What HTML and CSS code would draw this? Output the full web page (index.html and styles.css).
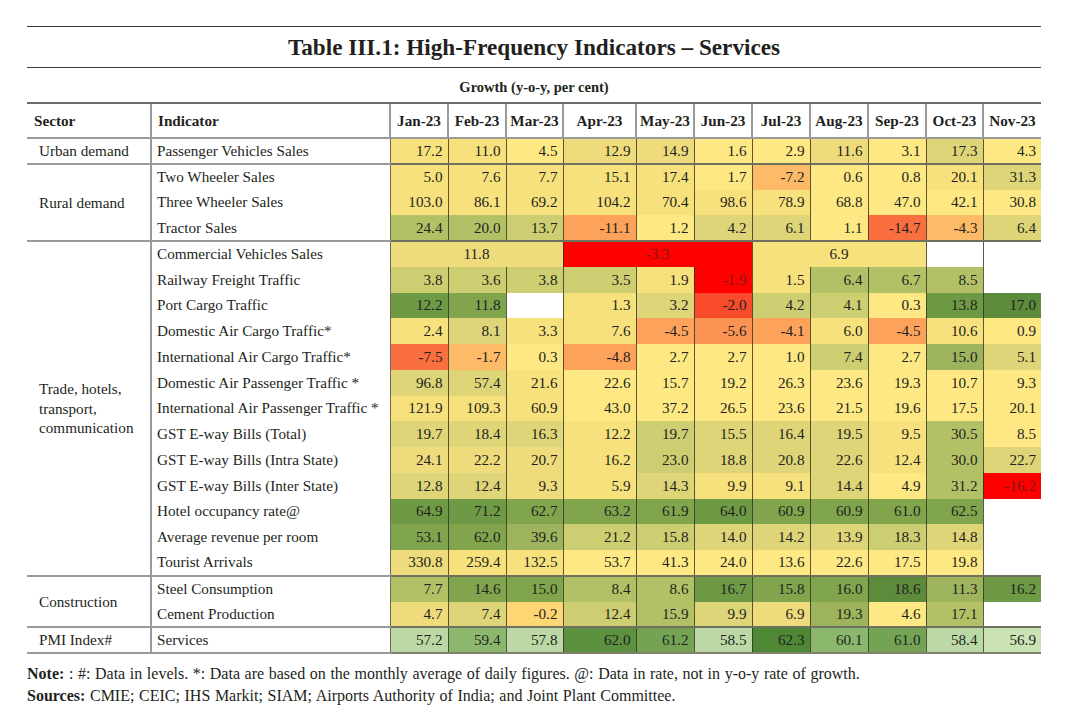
FILE: index.html
```html
<!DOCTYPE html>
<html lang="en">
<head>
<meta charset="utf-8">
<title>Table III.1: High-Frequency Indicators – Services</title>
<link rel="stylesheet" href="styles.css">
</head>
<body>
<div class="page">
  <h1 class="title">Table III.1: High-Frequency Indicators – Services</h1>
  <div class="caption">Growth (y-o-y, per cent)</div>
  <table class="hfi">
    <colgroup>
      <col class="w-sector"><col class="w-ind">
      <col class="w-m58"><col class="w-m58"><col class="w-m57"><col class="w-m73">
      <col class="w-m58"><col class="w-m58"><col class="w-m58"><col class="w-m58">
      <col class="w-m58"><col class="w-m57"><col class="w-m58">
    </colgroup>
    <thead>
      <tr>
        <th class="h-left h-sector">Sector</th>
        <th class="h-left">Indicator</th>
        <th>Jan-23</th><th>Feb-23</th><th>Mar-23</th><th>Apr-23</th><th>May-23</th><th>Jun-23</th>
        <th>Jul-23</th><th>Aug-23</th><th>Sep-23</th><th>Oct-23</th><th class="h-last">Nov-23</th>
      </tr>
    </thead>
    <tbody>
      <tr class="grp">
        <td class="sector">Urban demand</td>
        <td class="ind">Passenger Vehicles Sales</td>
        <td class="v y1">17.2</td><td class="v y1">11.0</td><td class="v y0">4.5</td><td class="v y2">12.9</td><td class="v y2">14.9</td><td class="v y0">1.6</td><td class="v y0">2.9</td><td class="v y2">11.6</td><td class="v y0">3.1</td><td class="v g1">17.3</td><td class="v y0 last">4.3</td>
      </tr>
      <tr class="grp">
        <td class="sector" rowspan="3">Rural demand</td>
        <td class="ind">Two Wheeler Sales</td>
        <td class="v y1">5.0</td><td class="v y1">7.6</td><td class="v y1">7.7</td><td class="v y1">15.1</td><td class="v y1">17.4</td><td class="v y0">1.7</td><td class="v o3">-7.2</td><td class="v y0">0.6</td><td class="v y0">0.8</td><td class="v y1">20.1</td><td class="v g1 last">31.3</td>
      </tr>
      <tr>
        <td class="ind">Three Wheeler Sales</td>
        <td class="v y1">103.0</td><td class="v y1">86.1</td><td class="v y1">69.2</td><td class="v y1">104.2</td><td class="v y1">70.4</td><td class="v y1">98.6</td><td class="v y1">78.9</td><td class="v y0">68.8</td><td class="v y0">47.0</td><td class="v y0">42.1</td><td class="v y0 last">30.8</td>
      </tr>
      <tr>
        <td class="ind">Tractor Sales</td>
        <td class="v g3">24.4</td><td class="v g3">20.0</td><td class="v g2">13.7</td><td class="v o2">-11.1</td><td class="v y0">1.2</td><td class="v g1">4.2</td><td class="v g1">6.1</td><td class="v y0">1.1</td><td class="v o1">-14.7</td><td class="v o3">-4.3</td><td class="v g1 last">6.4</td>
      </tr>
      <tr class="grp">
        <td class="sector" rowspan="13">Trade, hotels,<br>transport,<br>communication</td>
        <td class="ind">Commercial Vehicles Sales</td>
        <td class="v c y2" colspan="3">11.8</td><td class="v c r0" colspan="3">-3.3</td><td class="v c y1" colspan="3">6.9</td><td class="v wb"></td><td class="v w last"></td>
      </tr>
      <tr>
        <td class="ind">Railway Freight Traffic</td>
        <td class="v g2">3.8</td><td class="v g2">3.6</td><td class="v g2">3.8</td><td class="v g2">3.5</td><td class="v y1">1.9</td><td class="v r0 notop">-1.9</td><td class="v y1">1.5</td><td class="v g3">6.4</td><td class="v g3">6.7</td><td class="v g3">8.5</td><td class="v w last"></td>
      </tr>
      <tr>
        <td class="ind">Port Cargo Traffic</td>
        <td class="v g6">12.2</td><td class="v g5">11.8</td><td class="v w"></td><td class="v y1">1.3</td><td class="v g1">3.2</td><td class="v r1">-2.0</td><td class="v g2">4.2</td><td class="v g2">4.1</td><td class="v y0">0.3</td><td class="v g6">13.8</td><td class="v g7 last">17.0</td>
      </tr>
      <tr>
        <td class="ind">Domestic Air Cargo Traffic*</td>
        <td class="v y1">2.4</td><td class="v g1">8.1</td><td class="v y1">3.3</td><td class="v y1">7.6</td><td class="v o2">-4.5</td><td class="v o2b">-5.6</td><td class="v o2">-4.1</td><td class="v y1">6.0</td><td class="v o2">-4.5</td><td class="v y1">10.6</td><td class="v y0 last">0.9</td>
      </tr>
      <tr>
        <td class="ind">International Air Cargo Traffic*</td>
        <td class="v o1">-7.5</td><td class="v o3">-1.7</td><td class="v y0">0.3</td><td class="v o2">-4.8</td><td class="v y0">2.7</td><td class="v y0">2.7</td><td class="v y0">1.0</td><td class="v g2">7.4</td><td class="v y0">2.7</td><td class="v g4">15.0</td><td class="v g1 last">5.1</td>
      </tr>
      <tr>
        <td class="ind">Domestic Air Passenger Traffic *</td>
        <td class="v g1">96.8</td><td class="v g1">57.4</td><td class="v y1">21.6</td><td class="v y0">22.6</td><td class="v y0">15.7</td><td class="v y0">19.2</td><td class="v y0">26.3</td><td class="v y0">23.6</td><td class="v y0">19.3</td><td class="v y0">10.7</td><td class="v y0 last">9.3</td>
      </tr>
      <tr>
        <td class="ind">International Air Passenger Traffic *</td>
        <td class="v y1">121.9</td><td class="v y1">109.3</td><td class="v y1">60.9</td><td class="v y0">43.0</td><td class="v y0">37.2</td><td class="v y0">26.5</td><td class="v y0">23.6</td><td class="v y0">21.5</td><td class="v y0">19.6</td><td class="v y0">17.5</td><td class="v y0 last">20.1</td>
      </tr>
      <tr>
        <td class="ind">GST E-way Bills (Total)</td>
        <td class="v g1">19.7</td><td class="v g1">18.4</td><td class="v g1">16.3</td><td class="v y1">12.2</td><td class="v g2">19.7</td><td class="v g1">15.5</td><td class="v g1">16.4</td><td class="v g1">19.5</td><td class="v y1">9.5</td><td class="v g3">30.5</td><td class="v y0 last">8.5</td>
      </tr>
      <tr>
        <td class="ind">GST E-way Bills (Intra State)</td>
        <td class="v y2">24.1</td><td class="v y2">22.2</td><td class="v y2">20.7</td><td class="v y1">16.2</td><td class="v g2">23.0</td><td class="v g1">18.8</td><td class="v g1">20.8</td><td class="v g1">22.6</td><td class="v y1">12.4</td><td class="v g3">30.0</td><td class="v g1 last">22.7</td>
      </tr>
      <tr>
        <td class="ind">GST E-way Bills (Inter State)</td>
        <td class="v g1">12.8</td><td class="v g1">12.4</td><td class="v y2">9.3</td><td class="v y1">5.9</td><td class="v g1">14.3</td><td class="v y1">9.9</td><td class="v y1">9.1</td><td class="v g1">14.4</td><td class="v y0">4.9</td><td class="v g3">31.2</td><td class="v r0 last">-16.2</td>
      </tr>
      <tr>
        <td class="ind">Hotel occupancy rate@</td>
        <td class="v g6">64.9</td><td class="v g6">71.2</td><td class="v g5">62.7</td><td class="v g5">63.2</td><td class="v g5">61.9</td><td class="v g6">64.0</td><td class="v g5">60.9</td><td class="v g5">60.9</td><td class="v g5">61.0</td><td class="v g5">62.5</td><td class="v w last"></td>
      </tr>
      <tr>
        <td class="ind">Average revenue per room</td>
        <td class="v g5">53.1</td><td class="v g5">62.0</td><td class="v g4">39.6</td><td class="v g2">21.2</td><td class="v g2">15.8</td><td class="v g1">14.0</td><td class="v g1">14.2</td><td class="v g1">13.9</td><td class="v g2">18.3</td><td class="v g1">14.8</td><td class="v w last"></td>
      </tr>
      <tr>
        <td class="ind">Tourist Arrivals</td>
        <td class="v y2">330.8</td><td class="v y1">259.4</td><td class="v y1">132.5</td><td class="v y0">53.7</td><td class="v y0">41.3</td><td class="v y0">24.0</td><td class="v y0">13.6</td><td class="v y0">22.6</td><td class="v y0">17.5</td><td class="v y0">19.8</td><td class="v w last"></td>
      </tr>
      <tr class="grp">
        <td class="sector" rowspan="2">Construction</td>
        <td class="ind">Steel Consumption</td>
        <td class="v g3">7.7</td><td class="v g5">14.6</td><td class="v g5">15.0</td><td class="v g3">8.4</td><td class="v g3">8.6</td><td class="v g6">16.7</td><td class="v g5">15.8</td><td class="v g5">16.0</td><td class="v g7">18.6</td><td class="v g4">11.3</td><td class="v g6 last">16.2</td>
      </tr>
      <tr>
        <td class="ind">Cement Production</td>
        <td class="v y2">4.7</td><td class="v g1">7.4</td><td class="v o4">-0.2</td><td class="v g2">12.4</td><td class="v g3">15.9</td><td class="v g1">9.9</td><td class="v y2">6.9</td><td class="v g4">19.3</td><td class="v y0">4.6</td><td class="v g3">17.1</td><td class="v w last"></td>
      </tr>
      <tr class="grp end">
        <td class="sector">PMI Index#</td>
        <td class="ind">Services</td>
        <td class="v p1">57.2</td><td class="v p3">59.4</td><td class="v p1">57.8</td><td class="v p5">62.0</td><td class="v p4">61.2</td><td class="v p1">58.5</td><td class="v p6">62.3</td><td class="v p3">60.1</td><td class="v p4">61.0</td><td class="v p1">58.4</td><td class="v p0 last">56.9</td>
      </tr>
    </tbody>
  </table>
  <div class="notes">
    <p><b>Note:</b> : #: Data in levels. *: Data are based on the monthly average of daily figures. @: Data in rate, not in y-o-y rate of growth.</p>
    <p><b>Sources:</b> CMIE; CEIC; IHS Markit; SIAM; Airports Authority of India; and Joint Plant Committee.</p>
  </div>
</div>
</body>
</html>
```
FILE: styles.css
```css
html, body {
  margin: 0;
  padding: 0;
  background: #ffffff;
}
body {
  font-family: "Liberation Serif", "Times New Roman", serif;
  color: #231f20;
}
.page {
  width: 1014px;
  padding: 26px 0 0 27px;
}
.title {
  margin: 0;
  height: 40px;
  border-top: 1px solid #3a3a3a;
  border-bottom: 1px solid #3a3a3a;
  display: flex;
  align-items: center;
  justify-content: center;
  font-size: 23.2px;
  font-weight: bold;
}
.caption {
  padding: 11px 0 7px;
  line-height: 16px;
  font-size: 14.5px;
  font-weight: bold;
  text-align: center;
}
.hfi {
  width: 1014px;
  table-layout: fixed;
  border-collapse: collapse;
  font-size: 15.2px;
}
.w-sector { width: 124px; }
.w-ind { width: 239px; }
.w-m58 { width: 58px; }
.w-m57 { width: 57px; }
.w-m73 { width: 73px; }

.hfi th {
  height: 33px;
  padding: 0;
  font-size: 15.2px;
  font-weight: bold;
  text-align: center;
  border-top: 2px solid #6a6a6a;
  border-bottom: 2px solid #9a9a9a;
  border-left: 2px solid #9a9a9a;
}
.hfi th.h-left {
  text-align: left;
  padding-left: 6px;
}
.hfi th.h-sector {
  border-left: none;
  padding-left: 7px;
}
.hfi tbody tr {
  height: 25.75px;
}
.hfi td {
  padding: 0;
  line-height: 18px;
  white-space: nowrap;
}
.hfi td.sector {
  padding-left: 12px;
  line-height: 19.5px;
  vertical-align: middle;
  border-right: 2px solid #9a9a9a;
}
.hfi td.ind {
  padding-left: 5px;
  border-right: 1px solid #6b6b52;
}
.hfi tr.grp td {
  border-top: 2px solid #9a9a9a;
}
.hfi tr.grp td.v {
  border-top: 2px solid #707060;
}
.hfi tr.end td {
  border-bottom: 2px solid #9a9a9a;
}
.hfi tr.end td.v {
  border-bottom: 2px solid #808070;
}
.hfi td.v {
  text-align: right;
  padding-right: 5px;
  border-left: 1px solid rgba(50, 50, 30, 0.8);
}
.hfi td.v.c {
  text-align: center;
  padding-right: 0;
}
.hfi td.v.notop {
  border-top: none;
}

/* yellow / orange / red */
.r0 { background: #ff0000; color: #7a1c10; }
.r1 { background: #f94b2b; }
.o1 { background: #f96f40; }
.o2 { background: #fca25a; }
.o2b { background: #fb9352; }
.o3 { background: #fdba67; }
.o4 { background: #fed674; }
.y0 { background: #fde883; }
.y1 { background: #f7e17c; }
.y2 { background: #eedb7b; }
/* greens */
.g1 { background: #ddd577; }
.g2 { background: #cdcd71; }
.g3 { background: #b3c166; }
.g4 { background: #9eb45c; }
.g5 { background: #80a54d; }
.g6 { background: #6f9a45; }
.g7 { background: #5b8b3b; }
/* PMI scale */
.p0 { background: #cbe1b6; }
.p1 { background: #bcd9a5; }
.p3 { background: #8cb86d; }
.p4 { background: #74a453; }
.p5 { background: #5c913f; }
.p6 { background: #4e8835; }
.w { background: #ffffff; border-left-color: transparent; }
.wb { background: #ffffff; border-right: 1px solid rgba(50, 50, 30, 0.8); }
.hfi tr.grp td.w, .hfi tr.grp td.wb { border-top: 2px solid #707060; }

.notes {
  margin-top: 9px;
  font-size: 16px;
  line-height: 22px;
  word-spacing: 0.6px;
}
.notes p {
  margin: 0;
}
```
